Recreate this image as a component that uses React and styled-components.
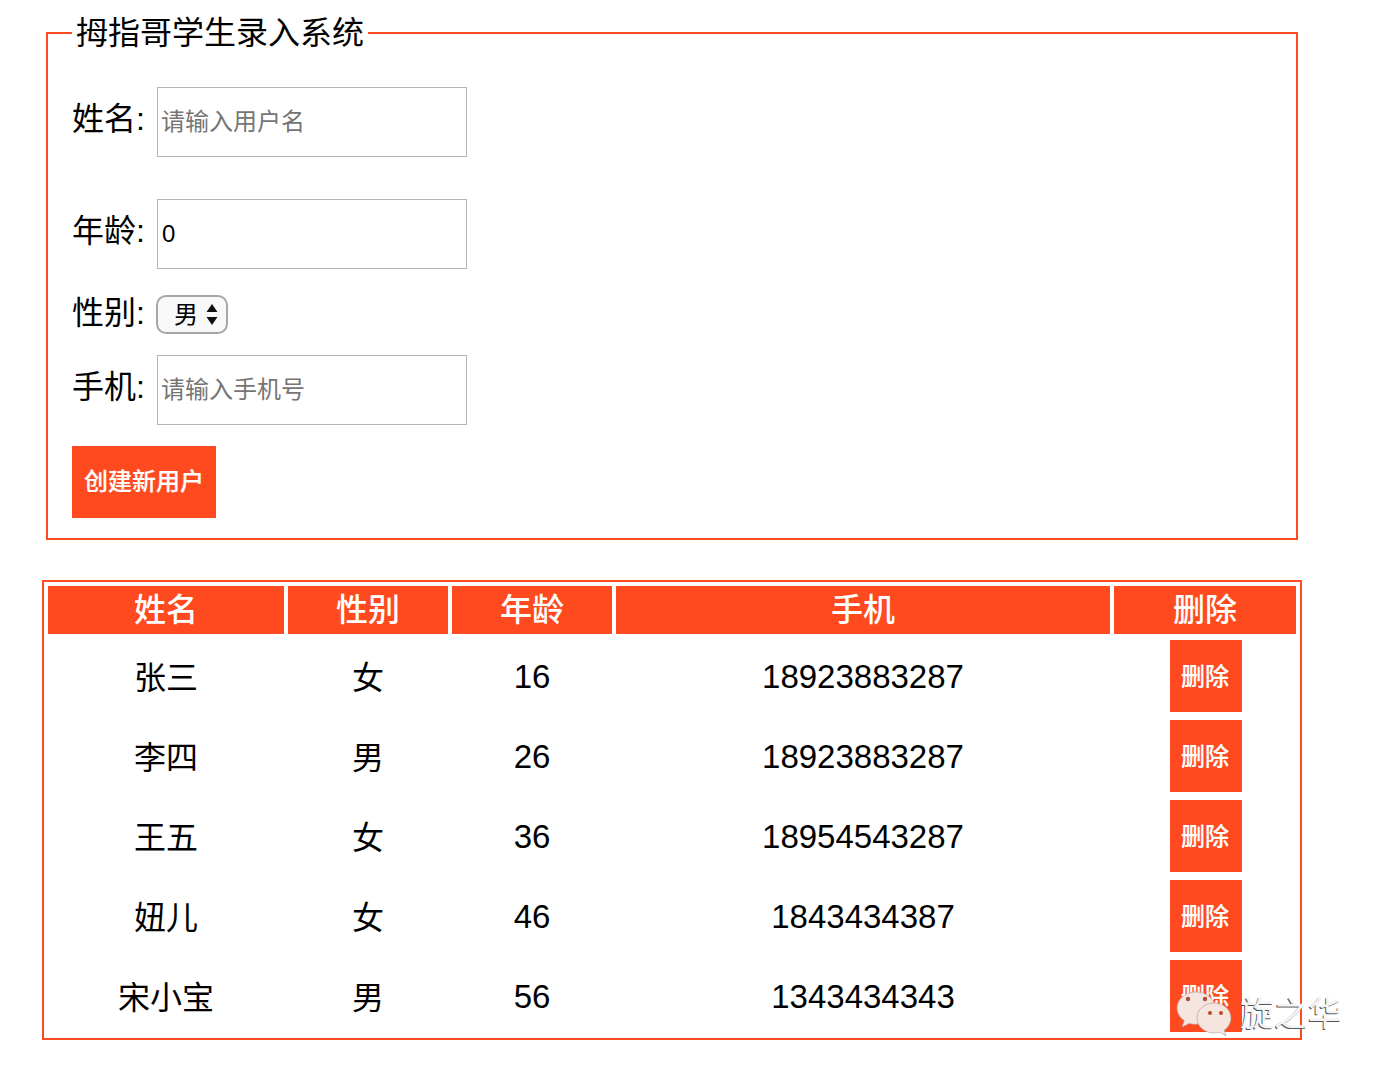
import React from 'react';
import styled, { createGlobalStyle } from 'styled-components';

const orange = '#ff4a1f';
const fontStack = '"Liberation Sans", "Noto Sans CJK SC", sans-serif';

const GlobalStyle = createGlobalStyle`
  html, body {
    margin: 0;
    background: #ffffff;
    color: #000000;
    font-family: ${fontStack};
  }
`;

const Page = styled.div`
  position: relative;
  width: 1386px;
  height: 1076px;
  padding: 15px 0 0 42px;
  box-sizing: border-box;
  overflow: hidden;
`;

const Panel = styled.fieldset`
  width: 1252px;
  margin: 0 0 40px 4px;
  padding: 36px 24px 20px;
  border: 2px solid ${orange};
  box-sizing: border-box;
`;

const Legend = styled.legend`
  padding: 0 4px;
  font-size: 32px;
  line-height: 36px;
`;

const Row = styled.div`
  display: flex;
  align-items: ${(p) => p.$align || 'baseline'};
  margin-bottom: ${(p) => p.$gap}px;
`;

const Label = styled.label`
  width: 85px;
  font-size: 32px;
  line-height: 40px;
  flex: none;
`;

const TextInput = styled.input`
  width: 310px;
  height: 70px;
  padding: 0 3px 0 ${(p) => (p.type === 'number' ? 4 : 3)}px;
  border: 1px solid #b5b5b5;
  border-radius: 0;
  box-sizing: border-box;
  outline: none;
  font-family: ${fontStack};
  font-size: 24px;
  color: #000000;

  &::placeholder {
    color: #757575;
    opacity: 1;
  }
`;

const SelectWrap = styled.span`
  position: relative;
  display: inline-flex;
  width: 72px;
  height: 39px;
  margin: 2px 0 0 -1px;
`;

const Select = styled.select`
  appearance: none;
  width: 100%;
  height: 100%;
  padding: 0 0 0 16px;
  border: 2px solid #a6a6a6;
  border-radius: 10px;
  background: #f8f8f8;
  box-sizing: border-box;
  outline: none;
  font-family: ${fontStack};
  font-size: 24px;
  color: #000000;
`;

const SelectArrows = styled.svg`
  position: absolute;
  top: 8px;
  right: 10px;
  pointer-events: none;
`;

const ActionButton = styled.button`
  display: block;
  width: ${(p) => p.$width}px;
  height: 72px;
  padding: 0 ${(p) => p.$shift || 0}px ${(p) => p.$lift}px 0;
  border: none;
  background: ${orange};
  color: #ffffff;
  font-family: ${fontStack};
  font-size: 24px;
  font-weight: 500;
  -webkit-text-stroke: 0.2px #ffffff;
`;

const Table = styled.table`
  width: 1260px;
  border: 2px solid ${orange};
  border-spacing: 4px;
  table-layout: fixed;
  box-sizing: border-box;
`;

const HeadCell = styled.th`
  width: ${(p) => p.$width}px;
  height: 48px;
  padding: 0;
  box-sizing: border-box;
  background: ${orange};
  color: #ffffff;
  font-size: 32px;
  line-height: 40px;
  font-weight: 500;
  text-align: center;
`;

const Cell = styled.td`
  height: 76px;
  padding: ${(p) => (p.$number ? '4px 0 2px' : '2px 0 4px')};
  box-sizing: border-box;
  font-size: ${(p) => (p.$number ? 33 : 32)}px;
  text-align: center;
  vertical-align: middle;
`;

const ButtonCell = styled.td`
  height: 76px;
  padding: 2px 0 2px 2px;
  box-sizing: border-box;

  ${ActionButton} {
    margin: 0 auto;
  }
`;

const Watermark = styled.div`
  position: absolute;
  left: 1176px;
  top: 990px;
  display: flex;
  align-items: center;
  gap: 6px;
`;

const WatermarkText = styled.span`
  font-size: 34px;
  line-height: 46px;
  color: #f4f4f4;
  text-shadow: -1px 1px 0 #555555;
`;

const users = [
  { name: '张三', sex: '女', age: 16, phone: '18923883287' },
  { name: '李四', sex: '男', age: 26, phone: '18923883287' },
  { name: '王五', sex: '女', age: 36, phone: '18954543287' },
  { name: '妞儿', sex: '女', age: 46, phone: '1843434387' },
  { name: '宋小宝', sex: '男', age: 56, phone: '1343434343' },
];

const WeChatMark = () => (
  <svg width="58" height="48" viewBox="0 0 58 48">
    <path
      d="M20 2C9.500 2 1 9 1 18c0 5.200 2.800 9.600 7.200 12.600L6 37l7.400-3.600c2.100.6 4.300.9 6.600.9 10.500 0 19-7.300 19-16.300S30.500 2 20 2z"
      fill="#f6e4df"
      stroke="#a89a96"
      strokeWidth="0.6"
    />
    <path
      d="M38 13c-9.700 0-17 6.700-17 15s7.300 15 17 15c2 0 3.900-.3 5.700-.8L50 46l-1.600-6C52.400 37.200 55 33 55 28c0-8.300-7.300-15-17-15z"
      fill="#f6e4df"
      stroke="#a89a96"
      strokeWidth="0.6"
    />
    <circle cx="12" cy="9" r="2.200" fill="#a8503c" />
    <circle cx="29" cy="9" r="2.200" fill="#a8503c" />
    <circle cx="34" cy="23" r="2" fill="#c0492c" />
    <circle cx="45" cy="23" r="2" fill="#c0492c" />
  </svg>
);

const App = () => (
  <Page>
    <GlobalStyle />
    <Panel>
      <Legend>拇指哥学生录入系统</Legend>
      <Row $gap={42}>
        <Label>姓名:</Label>
        <TextInput placeholder="请输入用户名" />
      </Row>
      <Row $gap={24}>
        <Label>年龄:</Label>
        <TextInput type="number" defaultValue="0" />
      </Row>
      <Row $gap={21} $align="flex-start">
        <Label>性别:</Label>
        <SelectWrap>
          <Select defaultValue="男">
            <option>男</option>
            <option>女</option>
          </Select>
          <SelectArrows width="12" height="23" viewBox="0 0 12 23">
            <path d="M6 1l5.500 8H.5zM6 22L.5 14h11z" fill="#111111" />
          </SelectArrows>
        </SelectWrap>
      </Row>
      <Row $gap={21}>
        <Label>手机:</Label>
        <TextInput placeholder="请输入手机号" />
      </Row>
      <ActionButton $width={144} $lift={5}>创建新用户</ActionButton>
    </Panel>

    <Table>
      <thead>
        <tr>
          <HeadCell $width={236}>姓名</HeadCell>
          <HeadCell $width={160}>性别</HeadCell>
          <HeadCell $width={160}>年龄</HeadCell>
          <HeadCell $width={494}>手机</HeadCell>
          <HeadCell $width={182}>删除</HeadCell>
        </tr>
      </thead>
      <tbody>
        {users.map((user) => (
          <tr key={user.name}>
            <Cell>{user.name}</Cell>
            <Cell>{user.sex}</Cell>
            <Cell $number>{user.age}</Cell>
            <Cell $number>{user.phone}</Cell>
            <ButtonCell>
              <ActionButton $width={72} $lift={3} $shift={2}>删除</ActionButton>
            </ButtonCell>
          </tr>
        ))}
      </tbody>
    </Table>

    <Watermark>
      <WeChatMark />
      <WatermarkText>旋之华</WatermarkText>
    </Watermark>
  </Page>
);

export default App;
